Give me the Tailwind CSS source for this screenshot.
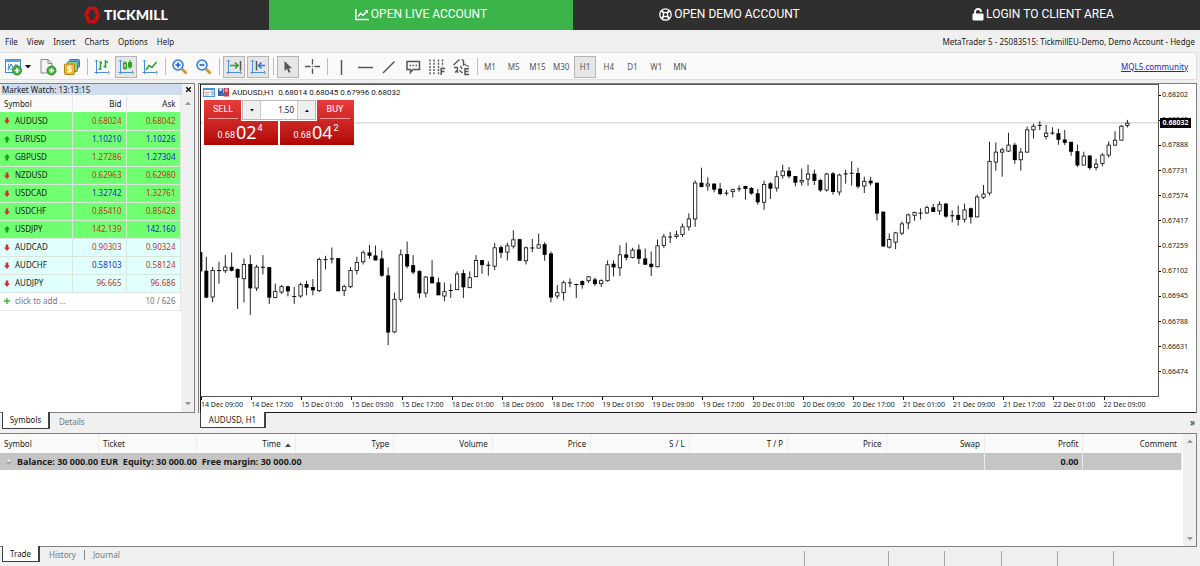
<!DOCTYPE html>
<html lang="en">
<head>
<meta charset="utf-8">
<title>Tickmill WebTrader</title>
<script src="https://cdn.jsdelivr.net/npm/@tailwindcss/browser@4"></script>
</head>
<body class="flex min-h-screen flex-col bg-[#f0f0f0] font-['Noto_Sans',sans-serif] text-[8px] leading-[12px] text-[#1a1a1a]">

<!-- Brand bar -->
<header class="grid h-[30px] shrink-0 grid-cols-[269fr_304fr_313fr_314fr] bg-[#2f2f2f] font-[Roboto,sans-serif] text-[12px] text-white [&>a]:pb-[2px]">
  <a href="#" class="flex items-center justify-center gap-[4px] pt-[2px] pr-[17px] font-[Lato,sans-serif] text-[14px] font-black">
    <svg class="h-[18px] w-[16px]" viewBox="0 0 16 18">
      <path d="M5 2.500h6.200L14 9l-2.800 6.500H5L2.200 9z" fill="none" stroke="#d40d12" stroke-width="3.600" stroke-linejoin="round"/>
      <path d="M9.500.5 8.500 4M15.500 8l-3.500.5M12.500 16.500l-1.700-3M6 17.500l1-3.500M.5 10l3.500-.5M3 1.500l2 3" stroke="#2f2f2f" stroke-width=".5"/>
    </svg>
    TICKMILL
  </a>
  <a href="#" class="flex items-center justify-center gap-[2px] bg-[#3bb54a]">
    <svg class="h-[13px] w-[14px]" viewBox="0 0 14 13" fill="none" stroke="#fff" stroke-width="1.500"><path d="M.8 1v10.500H14"/><path d="m3 8.500 2.700-3.200 2.300 2L12 3.200"/><path d="M9.500 2H13v3.500z" fill="#fff" stroke="none"/></svg>
    OPEN LIVE ACCOUNT
  </a>
  <a href="#" class="flex items-center justify-center gap-[2px]">
    <svg class="h-[13px] w-[13px]" viewBox="0 0 13 13" fill="none" stroke="#fff"><circle cx="6.500" cy="6.500" r="5.700" stroke-width="1.300"/><circle cx="6.500" cy="6.500" r="2.200" stroke-width="1.200"/><path d="m2.400 2.400 2.600 2.600M10.600 2.400 8 5M2.400 10.600 5 8M10.600 10.600 8 8" stroke-width="2"/></svg>
    OPEN DEMO ACCOUNT
  </a>
  <a href="#" class="flex items-center justify-center gap-[2px]">
    <svg class="h-[13px] w-[12px]" viewBox="0 0 12 13"><rect x=".5" y="5.500" width="11" height="7" rx="1" fill="#fff"/><path d="M3 6.500V4a3 3 0 0 1 6 0" fill="none" stroke="#fff" stroke-width="1.800"/></svg>
    LOGIN TO CLIENT AREA
  </a>
</header>

<!-- Menu -->
<div class="flex h-[22px] shrink-0 items-center justify-between pt-px pr-[5px] pl-[5px]">
  <nav class="flex gap-[9px]">
    <button>File</button><button>View</button><button>Insert</button><button>Charts</button><button>Options</button><button>Help</button>
  </nav>
  <span>MetaTrader 5 - 25083515: TickmillEU-Demo, Demo Account - Hedge</span>
</div>

<!-- Toolbar -->
<div class="mr-[3px] flex h-[28px] shrink-0 items-center border-y border-r border-[#dedede] bg-[#fafafa] pt-px pr-[8px] pl-[4px]">
  <div class="flex items-center gap-[2px]">
    <button aria-label="New chart" class="flex h-[22px] w-[31px] items-center gap-[2px]">
      <svg class="h-[18px] w-[19px]" viewBox="0 0 19 18"><rect x="1.500" y="1.500" width="15" height="13" fill="#fff" stroke="#3d87c9"/><path d="M1.500 1.500h15v2.500h-15z" fill="#5ba4e0"/><path d="M4.500 5.500v7M3 11h12" stroke="#5ba4e0"/><path d="m5 10 2-4 2.500 4 2-3.500 3 1.500" fill="none" stroke="#2f6fa8"/><circle cx="13" cy="12.500" r="4.500" fill="#45b23c" stroke="#2a8d25"/><path d="M13 10v5M10.500 12.500h5" stroke="#fff" stroke-width="1.500"/></svg>
      <svg class="h-[4px] w-[6px]" viewBox="0 0 6 4"><path d="M0 0h6L3 3.500z" fill="#111"/></svg>
    </button>
    <button aria-label="New order" class="grid h-[22px] w-[22px] place-items-center">
      <svg class="h-[18px] w-[18px]" viewBox="0 0 18 18"><path d="M2 1.500h7l4 4v9.500H2z" fill="#f4f4f4" stroke="#8a8a8a"/><path d="M9 1.500v4h4" fill="none" stroke="#8a8a8a"/><circle cx="12.500" cy="12.500" r="4.500" fill="#45b23c" stroke="#2a8d25"/><path d="M12.500 10v5M10 12.500h5" stroke="#fff" stroke-width="1.500"/></svg>
    </button>
    <button aria-label="Market" class="grid h-[22px] w-[22px] place-items-center">
      <svg class="h-[18px] w-[18px]" viewBox="0 0 18 18"><rect x="6.500" y="1.500" width="10" height="8" rx="1" fill="#5ba4e0" stroke="#2f77b8"/><rect x="4.500" y="3.500" width="10" height="10" rx="1" fill="#8ccf7b" stroke="#3c9134"/><rect x="1.500" y="6" width="10" height="10.500" rx="1" fill="#e9b93c" stroke="#b98510"/><path d="M8.500 8.800H5.600c-1.200 0-1.200 2.300 0 2.300h1.800c1.300 0 1.300 2.500 0 2.500H4.500M6.500 7.500v7.500" fill="none" stroke="#fff" stroke-width="1.200"/></svg>
    </button>
    <i class="mr-px ml-[2px] h-[17px] w-px bg-[#bdbdbd]"></i>
    <button aria-label="Bar chart" class="grid h-[22px] w-[22px] place-items-center">
      <svg class="h-[18px] w-[18px]" viewBox="0 0 18 18" fill="none"><path d="M3.500 2v14M1.500 14.500h14M2 3.500 3.500 2 5 3.500M15 13l1.500 1.500L15 16" stroke="#4b8fdc"/><path d="M7.500 3v9M5.500 11h2M7.500 5H9M12.500 2v8M10.500 8.500h2M12.500 4H15" stroke="#2da32a" stroke-width="1.600"/></svg>
    </button>
    <button aria-label="Candlesticks" aria-pressed="true" class="grid h-[22px] w-[22px] place-items-center border border-[#b5b5b5] bg-[#e6e6e6]">
      <svg class="h-[18px] w-[18px]" viewBox="0 0 18 18" fill="none"><path d="M3.500 2v14M1.500 14.500h14M2 3.500 3.500 2 5 3.500M15 13l1.500 1.500L15 16" stroke="#4b8fdc"/><path d="M8 3v9M13 2v9" stroke="#2da32a"/><path d="M6.700 5.200h2.600v5H6.700z" fill="#e6e6e6" stroke="#2da32a" stroke-width="1.400"/><path d="M11 4h4v5.500h-4z" fill="#2da32a"/></svg>
    </button>
    <button aria-label="Line chart" class="grid h-[22px] w-[22px] place-items-center">
      <svg class="h-[18px] w-[18px]" viewBox="0 0 18 18" fill="none"><path d="M3.500 2v14M1.500 14.500h14M2 3.500 3.500 2 5 3.500M15 13l1.500 1.500L15 16" stroke="#4b8fdc"/><path d="m5 12 3-4.500 3 2L15.500 4" stroke="#2da32a" stroke-width="1.600"/></svg>
    </button>
    <i class="mr-px ml-[2px] h-[17px] w-px bg-[#bdbdbd]"></i>
    <button aria-label="Zoom in" class="grid h-[22px] w-[22px] place-items-center">
      <svg class="h-[18px] w-[18px]" viewBox="0 0 18 18" fill="none"><path d="m11 11 4.500 4.500" stroke="#cf9538" stroke-width="2.800"/><circle cx="7" cy="7" r="5" fill="#eaf3ff" stroke="#2f7be0" stroke-width="1.500"/><path d="M7 4.500v5M4.500 7h5" stroke="#1f63cf" stroke-width="1.600"/></svg>
    </button>
    <button aria-label="Zoom out" class="grid h-[22px] w-[22px] place-items-center">
      <svg class="h-[18px] w-[18px]" viewBox="0 0 18 18" fill="none"><path d="m11 11 4.500 4.500" stroke="#cf9538" stroke-width="2.800"/><circle cx="7" cy="7" r="5" fill="#eaf3ff" stroke="#2f7be0" stroke-width="1.500"/><path d="M4.500 7h5" stroke="#1f63cf" stroke-width="1.600"/></svg>
    </button>
    <i class="mr-px ml-[2px] h-[17px] w-px bg-[#bdbdbd]"></i>
    <button aria-label="Auto scroll" aria-pressed="true" class="grid h-[22px] w-[22px] place-items-center border border-[#b5b5b5] bg-[#e6e6e6]">
      <svg class="h-[18px] w-[18px]" viewBox="0 0 18 18" fill="none"><path d="M3.500 2v14M1.500 14.500h14M2 3.500 3.500 2 5 3.500M15 13l1.500 1.500L15 16" stroke="#4b8fdc"/><path d="M5 7.500h8M10 4.500l3 3-3 3" stroke="#2da32a" stroke-width="1.600"/><path d="M15.500 3v9.500" stroke="#555" stroke-width="1.500"/></svg>
    </button>
    <button aria-label="Chart shift" aria-pressed="true" class="grid h-[22px] w-[22px] place-items-center border border-[#b5b5b5] bg-[#e6e6e6]">
      <svg class="h-[18px] w-[18px]" viewBox="0 0 18 18" fill="none"><path d="M3.500 2v14M1.500 14.500h14M2 3.500 3.500 2 5 3.500M15 13l1.500 1.500L15 16" stroke="#4b8fdc"/><path d="M16 7.500h-6M12.500 4.500l-3 3 3 3" stroke="#2f74d8" stroke-width="1.600"/><path d="M7.500 3v9.500" stroke="#555" stroke-width="1.500"/></svg>
    </button>
    <i class="mr-px ml-[2px] h-[17px] w-px bg-[#bdbdbd]"></i>
    <button aria-label="Cursor" aria-pressed="true" class="grid h-[22px] w-[22px] place-items-center border border-[#b5b5b5] bg-[#e6e6e6]">
      <svg class="h-[14px] w-[10px]" viewBox="0 0 10 14"><path d="M1.500 1v10l2.500-2.300 1.700 4 1.800-.8-1.700-3.700H9z" fill="#555"/></svg>
    </button>
    <button aria-label="Crosshair" class="grid h-[22px] w-[22px] place-items-center">
      <svg class="h-[17px] w-[17px]" viewBox="0 0 17 17"><path d="M8.500 1v5.500M8.500 10.500V16M1 8.500h5.500M10.500 8.500H16M8.500 8v1" stroke="#555" stroke-width="1.300"/></svg>
    </button>
    <i class="mr-px ml-[2px] h-[17px] w-px bg-[#bdbdbd]"></i>
    <button aria-label="Vertical line" class="grid h-[22px] w-[22px] place-items-center">
      <svg class="h-[16px] w-[16px]" viewBox="0 0 16 16"><path d="M7.500 1v15" stroke="#555" stroke-width="1.500"/></svg>
    </button>
    <button aria-label="Horizontal line" class="grid h-[22px] w-[22px] place-items-center">
      <svg class="h-[16px] w-[16px]" viewBox="0 0 16 16"><path d="M0 8.500h15" stroke="#555" stroke-width="1.500"/></svg>
    </button>
    <button aria-label="Trend line" class="grid h-[22px] w-[22px] place-items-center">
      <svg class="h-[16px] w-[16px]" viewBox="0 0 16 16"><path d="M1 14 12.500 2.500" stroke="#555" stroke-width="1.500"/></svg>
    </button>
    <button aria-label="Text label" class="grid h-[22px] w-[22px] place-items-center">
      <svg class="h-[16px] w-[16px]" viewBox="0 0 16 16" fill="none"><path d="M1 2.500h12.500v8H7L4.500 13.500v-3H1z" stroke="#555" stroke-width="1.500"/><path d="M3.500 6.500h8" stroke="#555" stroke-width="1.500" stroke-dasharray="1.500 1.500"/></svg>
    </button>
    <button aria-label="Fibonacci retracement" class="grid h-[22px] w-[22px] place-items-center">
      <svg class="h-[18px] w-[18px]" viewBox="0 0 18 18" fill="none" stroke="#555"><path d="M1 1.500v15M5 1.500v15M9.500 1.500v15M13.500 1.500v7" stroke-width="1.400" stroke-dasharray="2 1.200"/><path d="M12.200 17v-6.500h4M12.200 13.500h3.300" stroke-width="1.500"/></svg>
    </button>
    <button aria-label="Elliott wave" class="grid h-[22px] w-[22px] place-items-center">
      <svg class="h-[18px] w-[18px]" viewBox="0 0 18 18" fill="none" stroke="#555" stroke-width="1.300"><path d="M.5 7 6.500 1.500M2 14.500 4.500 12M8.500 1.500l2 1V7l2-1M4.500 9v6M7.500 8l1.500 3M12.500 7l3.500 1.500M1 9.500h3M6.500 12.500l3 2.500" /><path d="M16 10.700h-4v5.800h4M12 13.600h3.500" stroke-width="1.500"/></svg>
    </button>
    <i class="mr-px ml-[2px] h-[17px] w-px bg-[#bdbdbd]"></i>
  </div>
  <div class="flex w-[212px] justify-between text-[#555]">
    <button class="h-[22px] w-[22px]">M1</button><button class="h-[22px] w-[22px]">M5</button><button class="h-[22px] w-[22px]">M15</button><button class="h-[22px] w-[22px]">M30</button><button aria-pressed="true" class="h-[22px] w-[22px] border border-[#b5b5b5] bg-[#e6e6e6]">H1</button><button class="h-[22px] w-[22px]">H4</button><button class="h-[22px] w-[22px]">D1</button><button class="h-[22px] w-[22px]">W1</button><button class="h-[22px] w-[22px]">MN</button>
  </div>
  <a href="#" class="ml-auto text-[#2525c4] underline">MQL5.community</a>
</div>

<!-- Workspace -->
<main class="mt-[3px] flex grow">

  <!-- Market watch -->
  <section class="flex w-[195px] shrink-0 flex-col">
    <div class="flex grow flex-col border-t border-r border-b border-[#808080] bg-white">
      <div class="flex h-[11px] shrink-0 items-center bg-[#f0f0f0]">
        <h2 class="ml-px h-full w-[181px] bg-[#cfdded] pl-px leading-[11px]">Market Watch: 13:13:15</h2>
        <button aria-label="Close" class="grid h-[11px] grow place-items-center"><svg class="h-[5px] w-[5px]" viewBox="0 0 5 5"><path d="m0 0 5 5M5 0 0 5" stroke="#111" stroke-width="1.400"/></svg></button>
      </div>
      <div class="flex grow">
        <div class="w-[180px]">
          <table class="w-full table-fixed border-collapse">
            <colgroup><col class="w-[72px]"><col class="w-[54px]"><col class="w-[54px]"></colgroup>
            <thead><tr class="h-[17px] bg-[#fafafa] [&>th]:border-r [&>th]:border-[#e8e8e8] [&>th]:px-[4px] [&>th]:font-normal"><th class="text-left">Symbol</th><th class="text-right">Bid</th><th class="text-right">Ask</th></tr></thead>
            <tbody id="quotes"></tbody>
          </table>
        </div>
        <div class="ml-auto flex w-[13px] flex-col items-center justify-between bg-[#f0f0f0] py-[6px]">
          <svg class="h-[4px] w-[6px]" viewBox="0 0 6 4"><path d="M0 4h6L3 .5z" fill="#999"/></svg>
          <svg class="h-[4px] w-[6px]" viewBox="0 0 6 4"><path d="M0 0h6L3 3.500z" fill="#999"/></svg>
        </div>
      </div>
    </div>
    <div class="flex h-[20px] shrink-0 items-start">
      <button class="-mt-px ml-[2px] h-[17px] w-[48px] border-r-2 border-b border-l border-[#404040] bg-white">Symbols</button>
      <button class="ml-[9px] h-[17px] text-[#777]">Details</button>
    </div>
  </section>

  <!-- Chart -->
  <section class="mr-[3px] ml-[3px] flex min-w-0 grow flex-col">
    <div class="flex grow border-t border-r border-l border-[#808080] pl-px">
      <div class="flex grow border-b border-l border-[#1a1a1a] bg-white">
        <div class="flex min-w-0 grow flex-col">
          <div class="relative grow border-t border-r border-b border-[#555]">
            <svg id="plot" class="absolute inset-0 h-full w-full" viewBox="0 0 2874 936" preserveAspectRatio="none"><path d="M0 114H2874" stroke="#c9c9c9" stroke-width="3"/></svg>
            <!-- Chart title -->
            <div class="absolute top-[2px] left-[2px] flex items-center gap-[3px] font-[Roboto,sans-serif] leading-[11px] whitespace-pre">
              <svg class="h-[9px] w-[12px]" viewBox="0 0 12 9"><rect x=".5" y=".5" width="11" height="8" fill="#fff" stroke="#4b92d6"/><path d="M.5.5h11v1.500H.5z" fill="#4b92d6"/><path d="M7.500 2H11v6H7.500z" fill="#cfe2f5"/><path d="m1.500 5 1.500-1 1.500 1 2-1" fill="none" stroke="#d94a4a" stroke-width=".8"/><path d="M2 7h4M8 4h2.500M8 6h2.500" stroke="#4b92d6" stroke-width=".7"/></svg>
              <svg class="h-[9px] w-[11px]" viewBox="0 0 11 9"><path d="M0 .5h5V8H0z" fill="#2f67b5"/><path d="M5.500 0H11v8.500H5.500z" fill="#d33b3b"/><path d="M1.500.5h2v2.500h-2z" fill="#fff"/><path d="M7 .5h2.500V4H7z" fill="#9fc0ea"/><path d="M3 5h5v3H3z" fill="#3f6fc0"/></svg>
              <span>AUDUSD,H1  0.68014 0.68045 0.67996 0.68032</span>
            </div>
            <!-- One-click trading -->
            <div class="absolute top-[14px] left-[2px] grid h-[47px] w-[152px] grid-cols-2 gap-[2px] bg-white p-px text-white">
              <button class="flex flex-col bg-linear-to-b from-[#e83c3c] to-[#b00303] px-[4px]">
                <span class="h-[19px] w-[30px] border-b border-[#f2a0a0] font-[Roboto,sans-serif] text-[9px] leading-[19px]">SELL</span>
                <span class="flex w-full items-start justify-center gap-px pr-[2px] font-[Roboto,sans-serif]"><span class="pt-[10px] text-[9px]">0.68</span><span class="font-['Noto_Sans',sans-serif] text-[18px] leading-[26px]">02</span><span class="pt-[3px] text-[9px]">4</span></span>
              </button>
              <button class="flex flex-col items-end bg-linear-to-b from-[#e83c3c] to-[#b00303] px-[4px]">
                <span class="h-[19px] w-[30px] border-b border-[#f2a0a0] font-[Roboto,sans-serif] text-[9px] leading-[19px]">BUY</span>
                <span class="flex w-full items-start justify-center gap-px pr-[2px] font-[Roboto,sans-serif]"><span class="pt-[10px] text-[9px]">0.68</span><span class="font-['Noto_Sans',sans-serif] text-[18px] leading-[26px]">04</span><span class="pt-[3px] text-[9px]">2</span></span>
              </button>
              <div class="absolute top-0 left-[38px] h-[22px] w-[76px] bg-white p-px">
                <div class="flex h-[20px] border border-[#b9b9b9] text-[#222]">
                  <button aria-label="Decrease volume" class="grid w-[18px] place-items-center border-r border-[#c9c9c9] bg-[#efefef]"><svg class="h-[3px] w-[4px]" viewBox="0 0 4 3"><path d="M0 0h4L2 2.500z" fill="#111"/></svg></button>
                  <input aria-label="Volume" value="1.50" class="w-0 min-w-0 grow pr-[3px] text-right text-[8px]">
                  <button aria-label="Increase volume" class="grid w-[18px] place-items-center border-l border-[#c9c9c9] bg-[#efefef]"><svg class="h-[3px] w-[4px]" viewBox="0 0 4 3"><path d="M0 3h4L2 .5z" fill="#111"/></svg></button>
                </div>
              </div>
            </div>
          </div>
          <div id="times" class="flex h-[15px] shrink-0 text-[7px] leading-[15px]"></div>
        </div>
        <!-- Price axis -->
        <div class="relative flex w-[37px] shrink-0 flex-col">
          <div id="prices" class="flex grow flex-col justify-between pt-[6px] pb-[35px] text-[7px] leading-[10px]"></div>
          <div class="absolute top-[34px] left-px h-[10px] w-[31px] bg-black text-center text-[7px] leading-[10px] font-bold text-white">0.68032</div>
        </div>
      </div>
    </div>
    <div class="flex h-[20px] shrink-0 items-start justify-between pl-[2px]">
      <button class="-mt-px h-[16px] w-[66px] border-r-2 border-b border-l border-[#404040] bg-white">AUDUSD, H1</button>
      <button aria-label="More" class="pt-[3px] pr-[2px] text-[10px]">»</button>
    </div>
  </section>
</main>

<!-- Trade terminal -->
<section class="mr-[3px] flex h-[114px] shrink-0 border-y border-r border-[#808080] bg-white">
  <div class="min-w-0 flex-1">
    <table class="w-full table-fixed border-collapse">
      <thead><tr class="h-[19px] bg-[#fafafa] [&>th]:border-r [&>th]:border-[#ececec] [&>th]:px-[4px] [&>th]:pt-px [&>th]:text-right [&>th]:font-normal">
        <th><div class="text-left">Symbol</div></th><th><div class="text-left">Ticket</div></th><th>Time <svg class="ml-[2px] inline h-[4px] w-[6px]" viewBox="0 0 6 4"><path d="M0 4h6L3 .5z" fill="#444"/></svg></th><th>Type</th><th>Volume</th><th>Price</th><th>S / L</th><th>T / P</th><th>Price</th><th>Swap</th><th>Profit</th><th>Comment</th>
      </tr></thead>
      <tbody><tr class="h-[17px] bg-[#c5c5c5] text-[9px] font-bold [&>td]:border-r [&>td]:border-[#ececec]">
        <td colspan="10" class="pl-[6px]"><div class="flex items-center gap-[5px] whitespace-pre"><svg class="h-[6px] w-[6px]" viewBox="0 0 6 6"><circle cx="3" cy="3" r="2.500" fill="#a8a8a8"/><path d="M1 2.500a2 2 0 0 1 4 0z" fill="#f0f0f0"/></svg><span>Balance: 30 000.00 EUR  Equity: 30 000.00  Free margin: 30 000.00</span></div></td>
        <td class="px-[4px] text-right">0.00</td><td></td>
      </tr></tbody>
    </table>
  </div>
  <div class="ml-px flex w-[13px] shrink-0 flex-col items-center justify-between bg-[#f0f0f0] py-[5px]">
    <svg class="h-[4px] w-[6px]" viewBox="0 0 6 4"><path d="M0 4h6L3 .5z" fill="#999"/></svg>
    <svg class="h-[4px] w-[6px]" viewBox="0 0 6 4"><path d="M0 0h6L3 3.500z" fill="#999"/></svg>
  </div>
</section>

<footer class="flex h-[19px] shrink-0 items-start justify-between">
  <div class="flex items-start text-[#777]">
    <button class="-mt-px ml-[2px] h-[16px] w-[38px] border-r-2 border-b border-l border-[#404040] bg-white text-[#1a1a1a]">Trade</button>
    <button class="ml-[9px] h-[16px]">History</button>
    <i class="mt-[3px] ml-[8px] h-[10px] w-px bg-[#888]"></i>
    <button class="ml-[8px] h-[16px]">Journal</button>
  </div>
  <div class="flex h-[15px] self-end [&>i]:border-l [&>i]:border-[#a8a8a8]"><i class="w-[84px]"></i><i class="w-[56px]"></i><i class="w-[57px]"></i><i class="w-[56px]"></i><i class="w-[56px]"></i><i class="w-[87px]"></i></div>
</footer>

<script>
// [symbol, direction, bid, bid colour, ask, ask colour, highlighted]
const R = 'text-[#c8321e]', B = 'text-[#1030c8]';
const quotes = [
  ['AUDUSD', 'd', '0.68024', R, '0.68042', R, 1], ['EURUSD', 'u', '1.10210', B, '1.10226', B, 1],
  ['GBPUSD', 'u', '1.27286', R, '1.27304', B, 1], ['NZDUSD', 'd', '0.62963', R, '0.62980', R, 1],
  ['USDCAD', 'd', '1.32742', B, '1.32761', R, 1], ['USDCHF', 'd', '0.85410', R, '0.85428', R, 1],
  ['USDJPY', 'u', '142.139', R, '142.160', B, 1], ['AUDCAD', 'd', '0.90303', R, '0.90324', R, 0],
  ['AUDCHF', 'd', '0.58103', B, '0.58124', R, 0], ['AUDJPY', 'd', '96.665', R, '96.686', R, 0]
];
const arrow = {
  u: '<svg class="h-[7px] w-[6px]" viewBox="0 0 6 7"><path d="M3 0l3 3.500H4.300V6.500H1.700V3.500H0z" fill="#17a017"/></svg>',
  d: '<svg class="h-[7px] w-[6px]" viewBox="0 0 6 7"><path d="M3 7l3-3.500H4.300V.5H1.700v3H0z" fill="#dc2a2a"/></svg>',
  p: '<svg class="h-[6px] w-[6px]" viewBox="0 0 6 6"><path d="M3 0v6M0 3h6" stroke="#35b52a" stroke-width="1.300"/></svg>'
};
const cell = 'border-r border-b border-[#d9e6d9] px-[4px]';
document.getElementById('quotes').innerHTML = quotes.map(([s, d, b, bc, a, ac, hot]) =>
  `<tr class="h-[18px] ${hot ? 'bg-[#70ff70]' : 'bg-[#e0ffff]'}"><td class="${cell}"><div class="flex items-center gap-[5px]">${arrow[d]}${s}</div></td><td class="${cell} text-right ${bc}">${b}</td><td class="${cell} text-right ${ac}">${a}</td></tr>`).join('') +
  `<tr class="h-[18px] text-[#777]"><td colspan="2" class="border-b border-[#e8e8e8] px-[4px]"><div class="flex items-center gap-[5px]">${arrow.p}click to add ...</div></td><td class="border-r border-b border-[#e8e8e8] px-[4px] text-right">10 / 626</td></tr>`;

document.getElementById('times').innerHTML = ['14 Dec 09:00', '14 Dec 17:00', '15 Dec 01:00', '15 Dec 09:00', '15 Dec 17:00', '18 Dec 01:00', '18 Dec 09:00', '18 Dec 17:00', '19 Dec 01:00', '19 Dec 09:00', '19 Dec 17:00', '20 Dec 01:00', '20 Dec 09:00', '20 Dec 17:00', '21 Dec 01:00', '21 Dec 09:00', '21 Dec 17:00', '22 Dec 01:00', '22 Dec 09:00']
  .map(t => `<span class="flex w-[5.235%] shrink-0 whitespace-nowrap"><i class="-mr-px h-[3px] w-px shrink-0 bg-black"></i><span>${t}</span></span>`).join('');
document.getElementById('prices').innerHTML = ['0.68202', '0.68045', '0.67888', '0.67731', '0.67574', '0.67417', '0.67259', '0.67102', '0.66945', '0.66788', '0.66631', '0.66474']
  .map(p => `<span class="flex items-center gap-px"><i class="h-px w-[2px] bg-black"></i>${p}</span>`).join('');

// Candles: [high, body top, body bottom, low, filled], grouped by the offset of their scale
const groups = [
  [405, [[99,99,155,155,1],[112,155,234,237,1],[143,153,233,249,0],[127,153,153,193,1],[107,143,154,161,0],[99,143,153,156,1],[147,150,174,269,1],[117,135,178,249,0],[107,135,206,287,1],[136,143,206,215,0],[107,143,143,165,1],[144,144,234,254,1],[193,216,234,237,0],[197,202,218,224,0],[199,202,215,231,1],[203,231,231,254,1],[190,196,230,235,0],[184,195,204,228,1],[179,204,212,228,1],[114,120,214,218,0],[109,120,120,150,1],[84,118,118,132,1],[117,117,215,215,1],[196,202,213,230,0],[143,153,202,206,0],[112,129,153,165,0],[93,100,127,135,0],[76,100,108,118,1],[78,109,122,122,1],[93,118,168,173,1],[144,169,339,378,1],[220,240,338,342,0],[90,106,240,249,0],[66,105,140,147,1],[107,138,158,165,1],[152,156,221,237,1],[170,173,221,234,0],[122,173,191,191,1]]],
  [165, [[415,430,467,467,1],[429,457,470,486,0],[433,453,453,476,1],[396,404,451,452,0],[391,402,443,476,1],[396,415,445,446,0],[347,363,412,413,0],[363,363,376,403,1],[366,377,377,409,1],[310,325,380,392,0],[318,324,339,356,1],[310,319,338,363,0],[272,301,320,327,0],[298,300,363,364,1],[321,325,364,375,0],[298,325,325,338,1],[282,316,326,326,0],[308,315,345,364,1],[336,343,474,489,1],[437,460,470,478,0],[424,430,460,484,0],[417,430,430,444,1],[433,435,435,476,1],[423,426,436,448,1],[411,412,424,431,0],[415,421,433,440,1],[420,424,433,443,0],[363,376,424,427,0],[363,374,383,411,1],[317,346,385,410,0],[310,346,354,363,1],[325,332,354,357,0],[315,331,357,374,1],[327,358,375,375,1],[336,374,382,410,1],[300,319,382,384,0],[283,292,318,326,0],[277,292,292,311,1],[273,286,291,297,0],[252,262,285,292,0],[221,238,262,273,0],[122,130,238,262,0],[84,130,141,143,1],[113,133,139,153,0],[130,133,149,158,1],[130,148,162,167,1],[151,160,160,168,1],[147,150,156,174,0],[137,147,147,156,1],[138,140,147,180,1],[142,146,161,165,1],[148,162,187,195,1],[123,134,188,211,0],[127,132,146,178,1],[93,111,145,156,0],[75,94,108,117,0],[82,94,109,116,1],[110,110,128,140,1],[86,122,127,138,0],[75,103,118,138,0],[90,103,123,136,1],[117,122,151,157,1],[99,103,151,156,0],[97,102,156,165,1],[102,106,157,167,0],[90,102,102,132,1],[64,100,100,138,1],[84,101,140,147,1],[111,125,139,160,0],[111,124,130,138,1],[130,130,221,243,1],[217,217,320,321,1],[282,300,323,327,0],[277,280,308,329,0]]],
  [45, [[366,373,401,407,0],[342,346,370,389,0],[336,339,347,364,0],[326,340,340,360,1],[318,324,340,343,0],[313,324,336,337,1],[305,314,334,346,0],[310,313,350,355,1],[332,348,348,369,1],[318,347,360,378,1],[312,331,359,369,0],[324,327,352,372,1],[285,292,352,353,0],[256,283,293,298,0],[126,185,280,287,0],[128,157,187,213,0],[144,150,157,231,0],[99,136,154,157,0],[129,136,180,192,1],[145,157,180,213,0],[80,90,157,158,0],[72,79,90,116,0],[64,76,76,91,1],[75,100,110,119,0],[82,99,99,105,1],[87,101,119,135,1],[90,120,128,136,1],[126,127,155,168,1],[134,155,196,202,1],[156,169,196,197,0],[168,168,204,210,1],[177,193,203,212,0],[160,166,191,200,0],[125,136,166,173,0],[94,121,136,137,0],[75,79,121,122,0],[60,70,77,83,0]]]
];
let i = 0, out = '';
for (const [base, list] of groups) for (const [h, t, b, l, full] of list) {
  const x = Math.round(18.816 * i++ - 2.4);
  out += `<path d="M${x} ${h + base}V${l + base}" stroke="#222" stroke-width="3"/>`;
  out += full
    ? `<rect x="${x - 6}" y="${t + base - 1}" width="12" height="${Math.max(b - t + 2, 3)}" fill="#000"/>`
    : `<rect x="${x - 5}" y="${t + base}" width="10" height="${Math.max(b - t, 5)}" fill="#fff" stroke="#111" stroke-width="2.500"/>`;
}
document.getElementById('plot').insertAdjacentHTML('beforeend', out);
</script>
</body>
</html>
